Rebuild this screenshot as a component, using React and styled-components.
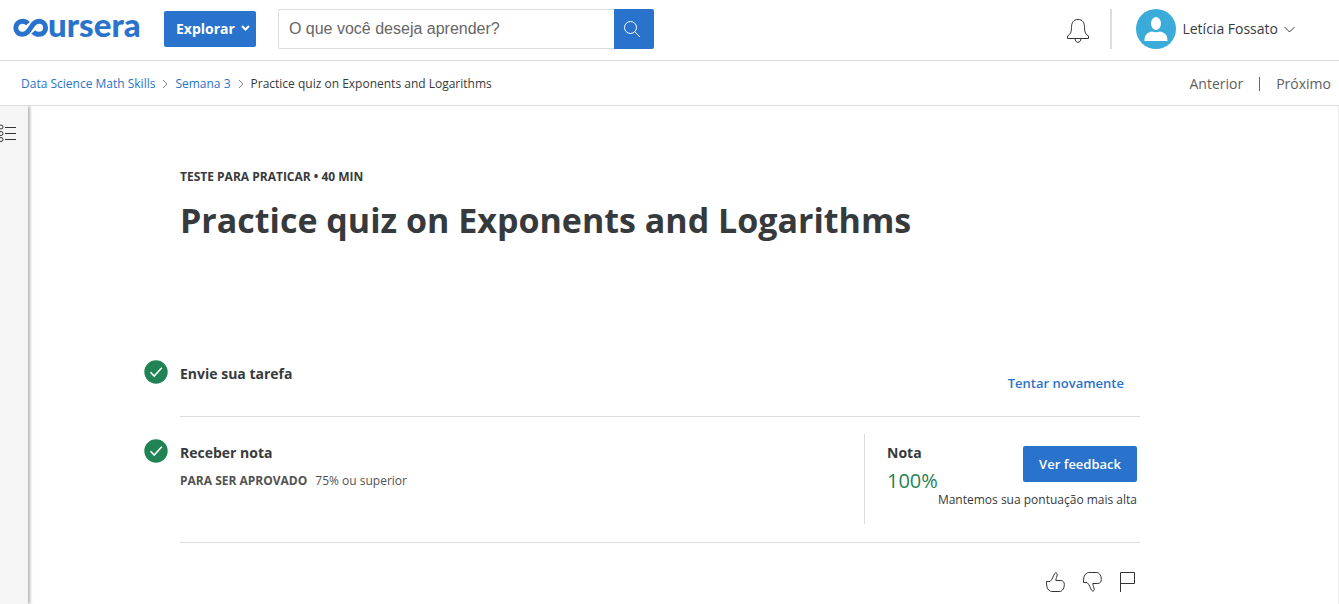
import React from "react";
import styled, { createGlobalStyle } from "styled-components";

const blue = "#2a73cc";
const line = "#dcdcdc";

const GlobalStyle = createGlobalStyle`
  *, *::before, *::after { box-sizing: border-box; }
  html, body, #root { height: 100%; }
  body {
    margin: 0;
    background: #fff;
    color: #373a3c;
    font-family: "Open Sans", "Noto Sans", sans-serif;
    font-size: 14px;
    line-height: 20px;
    overflow: hidden;
  }
  h1, h2, p, ol { margin: 0; padding: 0; }
  button, input { font-family: inherit; margin: 0; }
  button { cursor: pointer; }
  a { text-decoration: none; }
  svg { display: block; flex: none; }
`;

const Page = styled.div`
  display: flex;
  flex-direction: column;
  height: 100%;
`;

const TopBar = styled.header`
  display: flex;
  align-items: center;
  flex: none;
  height: 61px;
  padding: 0 44px 2px 12px;
  border-bottom: 1px solid ${line};
`;

const LogoLink = styled.a`
  display: block;
  width: 130px;
  margin-right: 22px;
`;

const LogoText = styled.text`
  font-family: "Lato", sans-serif;
  font-weight: 900;
  font-size: 33px;
`;

const ExploreButton = styled.button`
  display: flex;
  align-items: center;
  gap: 6px;
  height: 36px;
  padding: 0 6px 2px 12px;
  margin-right: 22px;
  border: 0;
  border-radius: 2px;
  background: ${blue};
  color: #fff;
  font-size: 14px;
  font-weight: 700;
`;

const SearchForm = styled.form`
  display: flex;
  width: 376px;
  height: 40px;
`;

const SearchInput = styled.input`
  flex: 1;
  min-width: 0;
  padding: 0 10px;
  border: 1px solid ${line};
  border-right: 0;
  border-radius: 2px 0 0 2px;
  background: #fff;
  color: #373a3c;
  font-family: "Liberation Sans", Arial, sans-serif;
  font-size: 16px;
  &::placeholder { color: #666; opacity: 1; }
`;

const SearchButton = styled.button`
  display: flex;
  align-items: center;
  justify-content: center;
  width: 40px;
  padding: 0 4px 0 0;
  border: 0;
  border-radius: 0 2px 2px 0;
  background: ${blue};
`;

const IconButton = styled.button`
  padding: 0;
  border: 0;
  background: none;
  color: #333;
`;

const Account = styled.div`
  display: flex;
  align-items: center;
  margin-left: auto;
`;

const AccountDivider = styled.span`
  width: 2px;
  height: 40px;
  margin: 0 24px 0 20px;
  background: ${line};
`;

const UserButton = styled.button`
  display: flex;
  align-items: center;
  gap: 6px;
  padding: 0;
  border: 0;
  background: none;
  color: #373a3c;
  font-size: 14px;
`;

const UserName = styled.span`
  padding-bottom: 2px;
`;

const SubBar = styled.nav`
  display: flex;
  align-items: center;
  justify-content: space-between;
  flex: none;
  height: 45px;
  padding: 2px 8px 0 21px;
  border-bottom: 1px solid ${line};
`;

const Breadcrumbs = styled.ol`
  display: flex;
  align-items: center;
  list-style: none;
  font-size: 12px;
`;

const Crumb = styled.li`
  display: flex;
  align-items: center;
  gap: 6px;
  margin-right: 6px;
`;

const CrumbLink = styled.a`
  color: ${blue};
`;

const Pager = styled.div`
  display: flex;
  align-items: center;
  gap: 16px;
`;

const PagerLink = styled.a`
  color: #5e5e5e;
  font-size: 14px;
`;

const PagerDivider = styled.span`
  width: 1px;
  height: 14px;
  background: #666;
`;

const Body = styled.div`
  display: flex;
  flex: 1;
  min-height: 0;
`;

const Rail = styled.aside`
  flex: none;
  width: 28px;
  padding-top: 18px;
  background: #f5f5f5;
  box-shadow: 2px 0 3px rgba(0, 0, 0, 0.3);
  clip-path: inset(0 -6px 0 0);
`;

const Main = styled.main`
  flex: 1;
  padding: 61px 198px 0 116px;
  border-right: 1px solid #ececec;
`;

const Heading = styled.header`
  padding-left: 36px;
  margin-bottom: 100px;
`;

const Kicker = styled.p`
  font-size: 12px;
  font-weight: 700;
  margin-bottom: 9px;
`;

const Title = styled.h1`
  font-size: 34px;
  line-height: 48px;
  font-weight: 700;
`;

const Step = styled.section`
  display: flex;
  gap: 12px;
`;

const StepIcon = styled.span`
  flex: none;
  width: 24px;
  padding-top: ${(p) => p.$top}px;
`;

const StepContent = styled.div`
  display: flex;
  flex: 1;
  justify-content: space-between;
  height: ${(p) => p.$height}px;
  border-bottom: 1px solid ${line};
`;

const StepTitle = styled.h2`
  font-size: 14px;
  line-height: 20px;
  font-weight: 700;
  color: #373a3c;
`;

const StepText = styled.div`
  padding-top: ${(p) => p.$top}px;
`;

const Requirement = styled.p`
  display: flex;
  gap: 8px;
  margin-top: 8px;
  font-size: 12px;
  color: #525252;
`;

const Strong = styled.strong`
  font-weight: 700;
`;

const RetryButton = styled.button`
  align-self: flex-start;
  margin-top: 29px;
  padding: 0 16px;
  border: 0;
  background: none;
  color: ${blue};
  font-size: 13px;
  line-height: 20px;
  font-weight: 600;
`;

const GradePanel = styled.div`
  display: flex;
  justify-content: space-between;
  width: 276px;
  height: 90px;
  margin-top: 17px;
  padding: 9px 3px 0 22px;
  border-left: 1px solid ${line};
`;

const Grade = styled.p`
  margin-top: 4px;
  font-size: 20px;
  line-height: 28px;
  color: #1f8354;
`;

const GradeActions = styled.div`
  display: flex;
  flex-direction: column;
  align-items: flex-end;
  padding-top: 3px;
`;

const FeedbackButton = styled.button`
  height: 36px;
  padding: 0 16px;
  border: 0;
  border-radius: 2px;
  background: ${blue};
  color: #fff;
  font-size: 13px;
  font-weight: 600;
`;

const GradeNote = styled.p`
  margin-top: 8px;
  font-size: 12px;
  white-space: nowrap;
`;

const Reactions = styled.div`
  display: flex;
  justify-content: flex-end;
  gap: 16px;
  padding: 28px 4px 0 0;
`;

const Stroke = ({ w, h, children, width = 1, color = "currentColor" }) => (
  <svg
    width={w}
    height={h}
    viewBox={`0 0 ${w} ${h}`}
    fill="none"
    stroke={color}
    strokeWidth={width}
    aria-hidden="true"
  >
    {children}
  </svg>
);

const Logo = () => (
  <svg width="130" height="54" viewBox="0 -7 130 54" aria-hidden="true">
    <path
      d="M16 14.600 C14.500 13 12.800 12.300 10.500 12.300 C6.500 12.300 3.800 15.200 3.800 18.800 C3.800 22.400 6.500 25.300 10.500 25.300 C19 25.300 18.500 12.300 27 12.300 C31 12.300 33.600 15.200 33.600 18.800 C33.600 22.400 31 25.300 27 25.300 C24.500 25.300 22.600 24.300 21.300 22.800"
      fill="none"
      stroke={blue}
      strokeWidth="5"
    />
    <LogoText x="36" y="28" fill={blue}>ursera</LogoText>
  </svg>
);

const CheckBadge = () => (
  <svg width="24" height="24" viewBox="0 0 24 24" role="img" aria-label="Concluído">
    <circle cx="12" cy="12" r="11.700" fill="#1f8354" />
    <path d="M6.500 12.300 L10.200 16 L17.800 7.800" fill="none" stroke="#fff" strokeWidth="1.600" />
  </svg>
);

const thumb =
  "M1.500 10.500 L5 10.500 C7.500 8.500 8 5.500 9.500 2.800 C10.300 1.200 12.500 2 12.200 3.800 C12 5.500 11 7 10.800 9.500 H15.800 C18 9.500 19.500 11.500 19.300 13.500 C19.300 16 18.600 18 17.200 19.300 C16.300 20.300 15.300 20.500 14 20.500 H6.500 C5 20.500 4.500 19.300 3 18.300 C1.800 16.500 1.500 14 1.500 10.500 Z";

export default function App() {
  return (
    <Page>
      <GlobalStyle />
      <TopBar>
        <LogoLink href="#" aria-label="Coursera"><Logo /></LogoLink>
        <ExploreButton type="button">
          Explorar
          <Stroke w={9} h={6} width={2}><path d="M1 1 L4.500 4.500 L8 1" /></Stroke>
        </ExploreButton>
        <SearchForm role="search" onSubmit={(e) => e.preventDefault()}>
          <SearchInput type="text" placeholder="O que você deseja aprender?" aria-label="Pesquisar" />
          <SearchButton type="submit" aria-label="Buscar">
            <Stroke w={18} h={18} color="#fff">
              <circle cx="7.500" cy="7.500" r="6" />
              <path d="M12 12 L17 17" />
            </Stroke>
          </SearchButton>
        </SearchForm>
        <Account>
          <IconButton type="button" aria-label="Notificações">
            <Stroke w={24} h={28}>
              <path d="M1.500 23.500 V21 C4.500 19.500 5.500 17 5.500 12.500 C5.500 7.500 7.500 4.500 12 4.500 C16.500 4.500 18.500 7.500 18.500 12.500 C18.500 17 19.500 19.500 22.500 21 V23.500 Z" />
              <path d="M9 23.500 C9 28.500 15 28.500 15 23.500" />
            </Stroke>
          </IconButton>
          <AccountDivider />
          <UserButton type="button">
            <svg width="40" height="40" viewBox="0 0 40 40" aria-hidden="true">
              <circle cx="20" cy="20" r="20" fill="#3bacd9" />
              <ellipse cx="20" cy="14.500" rx="5" ry="6.500" fill="#fff" />
              <path d="M8.500 32 C8.500 26 10.500 24 16 22.500 Q20 24 24 22.500 C29.500 24 31.500 26 31.500 32 Z" fill="#fff" />
            </svg>
            <UserName>Letícia Fossato</UserName>
            <Stroke w={11} h={7}><path d="M0.500 1 L5.500 6 L10.500 1" /></Stroke>
          </UserButton>
        </Account>
      </TopBar>
      <SubBar aria-label="Navegação do curso">
        <Breadcrumbs>
          <Crumb>
            <CrumbLink href="#">Data Science Math Skills</CrumbLink>
            <Stroke w={8} h={10} color="#888"><path d="M2 1 L6 5 L2 9" /></Stroke>
          </Crumb>
          <Crumb>
            <CrumbLink href="#">Semana 3</CrumbLink>
            <Stroke w={8} h={10} color="#888"><path d="M2 1 L6 5 L2 9" /></Stroke>
          </Crumb>
          <Crumb aria-current="page">Practice quiz on Exponents and Logarithms</Crumb>
        </Breadcrumbs>
        <Pager>
          <PagerLink href="#">Anterior</PagerLink>
          <PagerDivider />
          <PagerLink href="#">Próximo</PagerLink>
        </Pager>
      </SubBar>
      <Body>
        <Rail>
          <IconButton type="button" aria-label="Abrir índice">
            <Stroke w={17} h={20}>
              <circle cx="1" cy="3" r="2" />
              <circle cx="1" cy="9.500" r="2" />
              <circle cx="1" cy="15.500" r="2" />
              <path d="M5 3.500 H16 M5 9.500 H16 M5 15.500 H16" />
            </Stroke>
          </IconButton>
        </Rail>
        <Main>
          <Heading>
            <Kicker>TESTE PARA PRATICAR • 40 MIN</Kicker>
            <Title>Practice quiz on Exponents and Logarithms</Title>
          </Heading>
          <Step>
            <StepIcon $top={16}><CheckBadge /></StepIcon>
            <StepContent $height={73}>
              <StepText $top={20}><StepTitle>Envie sua tarefa</StepTitle></StepText>
              <RetryButton type="button">Tentar novamente</RetryButton>
            </StepContent>
          </Step>
          <Step>
            <StepIcon $top={22}><CheckBadge /></StepIcon>
            <StepContent $height={126}>
              <StepText $top={26}>
                <StepTitle>Receber nota</StepTitle>
                <Requirement><Strong>PARA SER APROVADO</Strong> 75% ou superior</Requirement>
              </StepText>
              <GradePanel>
                <div>
                  <StepTitle>Nota</StepTitle>
                  <Grade>100%</Grade>
                </div>
                <GradeActions>
                  <FeedbackButton type="button">Ver feedback</FeedbackButton>
                  <GradeNote>Mantemos sua pontuação mais alta</GradeNote>
                </GradeActions>
              </GradePanel>
            </StepContent>
          </Step>
          <Reactions>
            <IconButton type="button" aria-label="Gostei">
              <Stroke w={21} h={22}><path d={thumb} /></Stroke>
            </IconButton>
            <IconButton type="button" aria-label="Não gostei">
              <Stroke w={21} h={22}><path d={thumb} transform="translate(0 22) scale(1 -1)" /></Stroke>
            </IconButton>
            <IconButton type="button" aria-label="Sinalizar problema">
              <Stroke w={17} h={22}><path d="M1.500 21 V1.500 H15.500 V12.500 H1.500" /></Stroke>
            </IconButton>
          </Reactions>
        </Main>
      </Body>
    </Page>
  );
}
